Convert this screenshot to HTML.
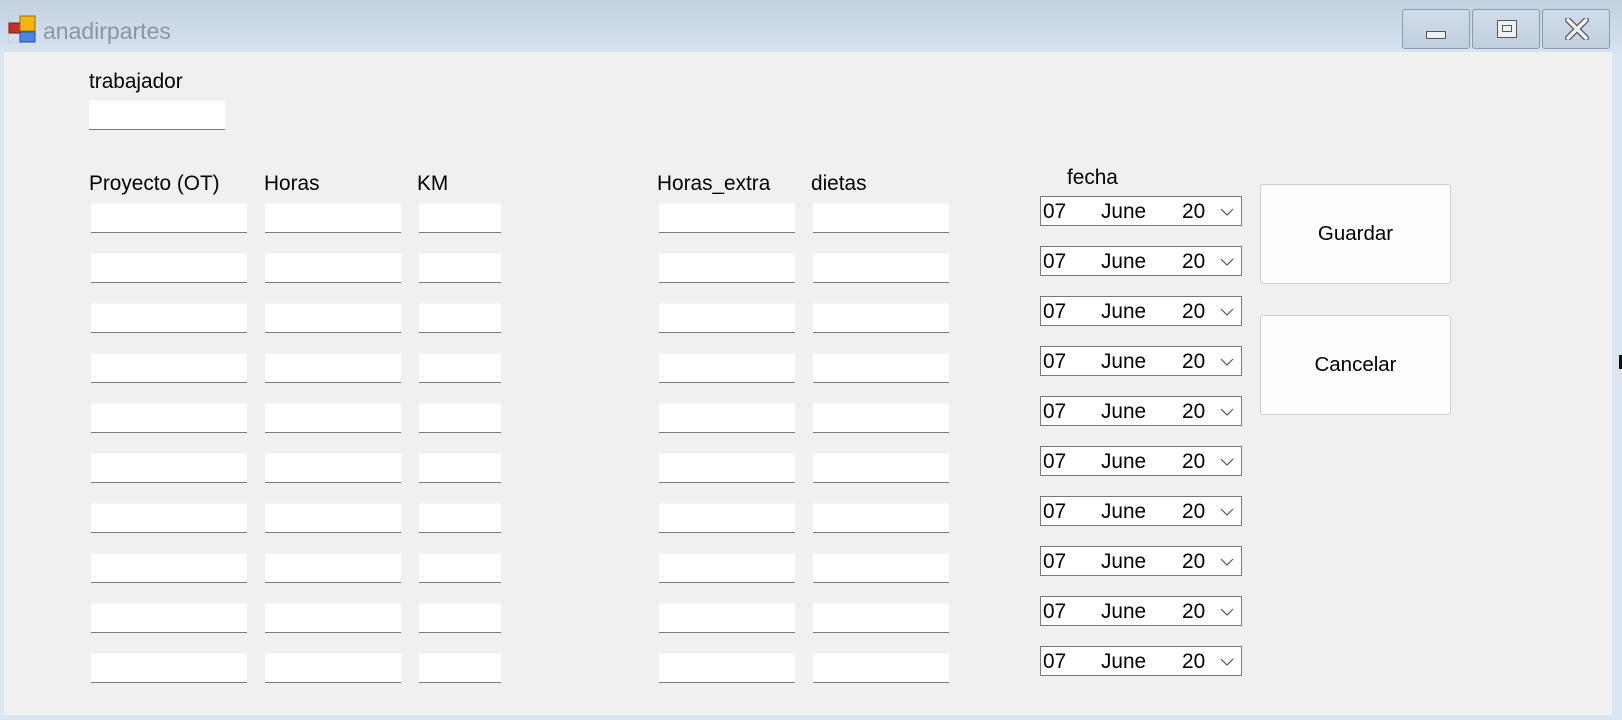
<!DOCTYPE html>
<html><head><meta charset="utf-8"><style>
*{margin:0;padding:0;box-sizing:border-box}
body{width:1622px;height:720px;overflow:hidden;background:#dbe6f2;font-family:"Liberation Sans",sans-serif;position:relative}
.title{position:absolute;left:0;top:0;width:1622px;height:52px;background:linear-gradient(#c3d1e0,#d6e2ef)}
.client{position:absolute;left:4px;top:52px;width:1608px;height:663px;background:#f0f0f0}
.t{position:absolute;font-size:20.8px;color:#000;white-space:nowrap;line-height:20px}
.in{position:absolute;height:30px;background:#fff;border-bottom:1px solid #7a7a7a;border-top:1px solid #f6f6f6}
.dp{position:absolute;left:1040px;width:202px;height:30px;background:#fff;border:1px solid #7a7a7a;font-size:20.8px}
.dp span{position:absolute;top:3px}
.btn{position:absolute;left:1260px;width:191px;height:100px;background:#fdfdfd;border:1px solid #cfcfcf;border-radius:3px;font-size:20.5px;display:flex;align-items:center;justify-content:center}
.wb{position:absolute;top:9px;width:68px;height:40px;border:1px solid #8a9ab0;border-radius:3px;background:linear-gradient(#d0dcea,#c2cfdf)}
</style></head><body>
<div class="title"></div>
<svg style="position:absolute;left:8px;top:15px" width="28" height="28" viewBox="0 0 28 28">
<rect x="0.5" y="0.5" width="27" height="27" fill="none" stroke="#c8cdd4" stroke-width="0.7"/>
<rect x="1" y="8" width="12" height="10" fill="#c62d2d" stroke="#7a1a1a"/>
<rect x="12" y="1" width="15" height="15" fill="#f1b614" stroke="#9a7000"/>
<rect x="12" y="17" width="15" height="10" fill="#4d86e0" stroke="#23519a"/>
</svg>
<div class="t" style="left:43px;top:19px;font-size:23px;line-height:24px;color:#8e959d">anadirpartes</div>
<div class="wb" style="left:1402px"><div style="position:absolute;left:23px;top:21px;width:20px;height:8px;border:1px solid #555;background:#eef1f5"></div></div>
<div class="wb" style="left:1472px"><div style="position:absolute;left:24px;top:10px;width:20px;height:18px;border:1px solid #555;background:#eef1f5"></div><div style="position:absolute;left:29px;top:15px;width:10px;height:7px;border:1px solid #555"></div></div>
<div class="wb" style="left:1542px"><svg style="position:absolute;left:22px;top:8px" width="24" height="22" viewBox="0 0 24 22"><path d="M3 2 L21 20 M21 2 L3 20" stroke="#555" stroke-width="6" stroke-linecap="round"/><path d="M3 2 L21 20 M21 2 L3 20" stroke="#f2f2f2" stroke-width="3.5" stroke-linecap="round"/></svg></div>
<div class="client"></div>
<div style="position:absolute;left:1619px;top:355px;width:3px;height:14px;background:#111"></div>
<div class="t" style="left:89px;top:72px">trabajador</div>
<div class="in" style="left:89px;top:100px;width:136px"></div>
<div class="t" style="left:89px;top:174px">Proyecto (OT)</div>
<div class="t" style="left:264px;top:174px">Horas</div>
<div class="t" style="left:417px;top:174px">KM</div>
<div class="t" style="left:657px;top:174px">Horas_extra</div>
<div class="t" style="left:811px;top:174px">dietas</div>
<div class="t" style="left:1067px;top:168px">fecha</div>
<div id="rows"></div>
<div class="btn" style="top:184px">Guardar</div>
<div class="btn" style="top:315px">Cancelar</div>
<script>
var h='';
for(var i=0;i<10;i++){var y=203+i*50;
h+='<div class="in" style="left:91px;top:'+y+'px;width:156px"></div>';
h+='<div class="in" style="left:265px;top:'+y+'px;width:136px"></div>';
h+='<div class="in" style="left:419px;top:'+y+'px;width:82px"></div>';
h+='<div class="in" style="left:659px;top:'+y+'px;width:136px"></div>';
h+='<div class="in" style="left:813px;top:'+y+'px;width:136px"></div>';
h+='<div class="dp" style="top:'+(196+i*50)+'px"><span style="left:2px">07</span><span style="left:60px">June</span><span style="left:141px">20</span><svg style="position:absolute;left:179px;top:11px" width="14" height="8" viewBox="0 0 14 8"><path d="M1 1 L7 7 L13 1" fill="none" stroke="#555" stroke-width="1.2"/></svg></div>';}
document.getElementById('rows').innerHTML=h;
</script>
</body></html>
